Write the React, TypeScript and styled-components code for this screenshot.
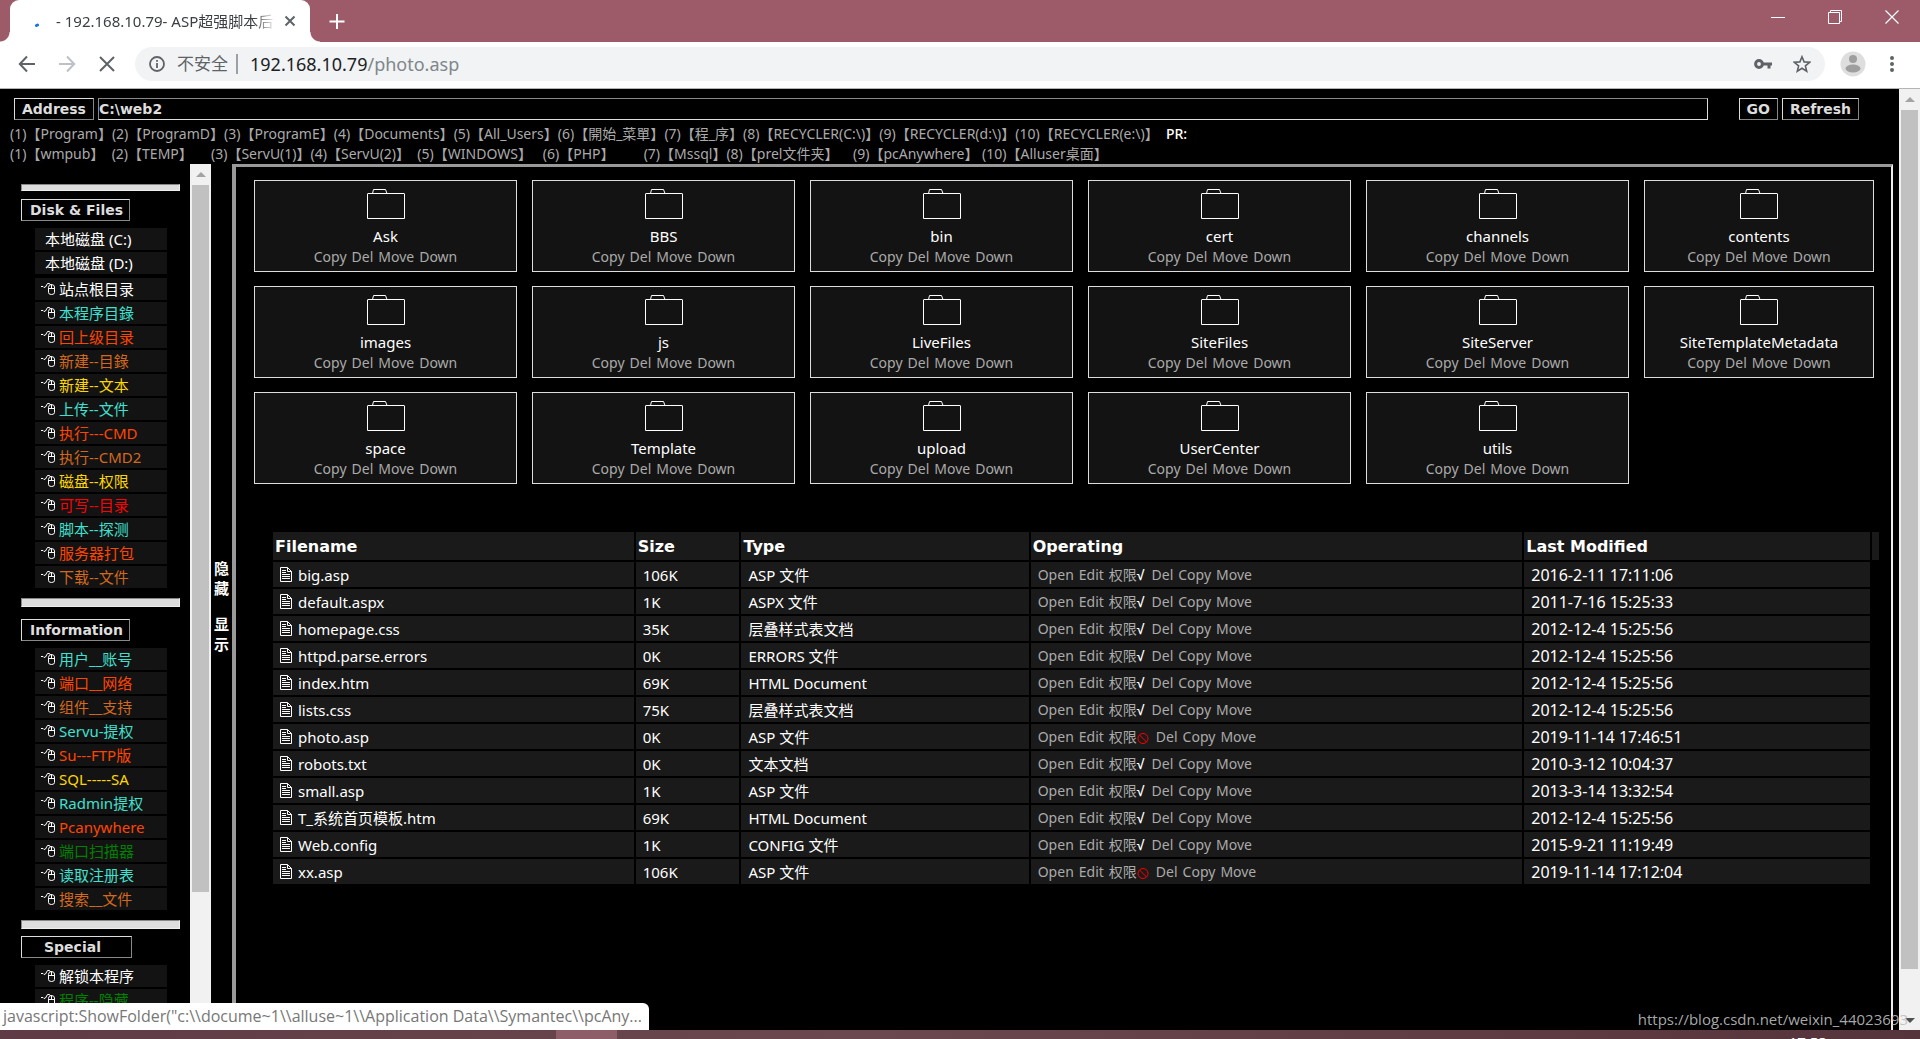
import React from "react";
import styled, { createGlobalStyle } from "styled-components";

const SANS = `"Noto Sans", "Noto Sans CJK SC", sans-serif`;
const BOLD = `"DejaVu Sans", "Noto Sans CJK SC", sans-serif`;

const GlobalStyle = createGlobalStyle`
  *, *::before, *::after { box-sizing: border-box; }
  body { margin: 0; background: #000; font-family: ${SANS}; font-size: 14px; color: #fff; }
  button, input { font: inherit; color: inherit; margin: 0; padding: 0; border: 0; background: none; }
  a { color: inherit; text-decoration: none; }
  ul { list-style: none; margin: 0; padding: 0; }
`;

/* ---------- browser window ---------- */

const Window = styled.div`
  display: flex;
  flex-direction: column;
  height: 100vh;
  overflow: hidden;
`;

const TabStrip = styled.header`
  display: flex;
  flex: none;
  height: 42px;
  padding-left: 10px;
  background: #9d5b69;
`;

const Tab = styled.div`
  position: relative;
  display: flex;
  align-items: center;
  width: 300px;
  padding: 0 12px 0 24px;
  background: #fff;
  border-radius: 9px 9px 0 0;

  &::before, &::after {
    content: "";
    position: absolute;
    bottom: 0;
    width: 10px;
    height: 10px;
  }
  &::before { right: 100%; background: radial-gradient(circle at 0 0, transparent 9px, #fff 10px); }
  &::after { left: 100%; background: radial-gradient(circle at 100% 0, transparent 9px, #fff 10px); }
`;

const TabTitle = styled.span`
  flex: 1;
  margin: 0 6px 0 14px;
  overflow: hidden;
  white-space: nowrap;
  font-size: 15px;
  line-height: 22px;
  color: #3c4043;
  mask-image: linear-gradient(90deg, #000 90%, transparent);
`;

const IconButton = styled.button<{ $w: number; $color?: string }>`
  display: flex;
  flex: none;
  align-items: center;
  justify-content: center;
  width: ${(p) => p.$w}px;
  height: 34px;
  color: ${(p) => p.$color || "#5f6368"};
`;

const WindowControls = styled.div`
  display: flex;
  margin-left: auto;
`;

const Toolbar = styled.div`
  display: flex;
  flex: none;
  align-items: center;
  height: 47px;
  padding: 0 8px 2px 7px;
  background: #fff;
  border-bottom: 1px solid #b4b4b4;
`;

const UrlBar = styled.div`
  display: flex;
  flex: 1;
  align-items: center;
  height: 34px;
  margin: 0 8px;
  padding: 0 4px 0 14px;
  border-radius: 17px;
  background: #f1f3f4;
  font-size: 17px;
  color: #5f6368;
`;

const Insecure = styled.span`
  margin-left: 12px;
  padding-right: 8px;
  border-right: 2px solid #9aa0a6;
  line-height: 20px;
`;

const Url = styled.span`
  flex: 1;
  margin-left: 12px;
  font-size: 18px;
  color: #80868b;
  b { font-weight: 400; color: #202124; }
`;

/* ---------- scroll bars ---------- */

const Track = styled.div`
  display: flex;
  flex: none;
  flex-direction: column;
  align-items: center;
  width: 21px;
  background: #f1f1f1;
`;

const Arrow = styled.span<{ $down?: boolean }>`
  flex: none;
  width: 0;
  height: 0;
  margin: ${(p) => (p.$down ? "auto 0 7px" : "8px 0 8px")};
  border: 5px solid transparent;
  border-width: ${(p) => (p.$down ? "5px 5px 0" : "0 5px 5px")};
  border-color: ${(p) => (p.$down ? "#505050 transparent" : "transparent transparent #a3a3a3")};
`;

const Thumb = styled.div<{ $share: number }>`
  flex: 0 0 ${(p) => p.$share}%;
  width: 17px;
  background: #c1c1c1;
`;

/* ---------- page ---------- */

const Viewport = styled.div`
  display: flex;
  flex: 1;
  min-height: 0;
`;

const Page = styled.div`
  display: flex;
  flex: 1;
  flex-direction: column;
  min-width: 0;
  padding-top: 9px;
  background: #000;
`;

const AddressForm = styled.form`
  display: flex;
  gap: 4px;
  padding: 0 40px 0 14px;
`;

const BevelButton = styled.button`
  display: block;
  height: 22px;
  padding: 0 7px;
  border: 1px solid;
  border-color: #ddd #888 #888 #ddd;
  font: bold 14px/20px ${BOLD};
  color: #ddd;
  text-align: left;
  white-space: nowrap;
`;

const PathInput = styled.input`
  flex: 1;
  min-width: 0;
  height: 22px;
  margin-right: 27px;
  border: 1px solid;
  border-color: #888 #ddd #ddd #888;
  font: bold 14px/20px ${BOLD};
  color: #ddd;
`;

const Shortcuts = styled.nav`
  padding: 4px 10px 0;
  color: #aaa;
`;

const ShortcutRow = styled.div`
  line-height: 20px;
  white-space: pre;
  b { font-weight: 500; color: #fff; }
`;

const Frames = styled.div`
  display: flex;
  flex: 1;
  min-height: 0;
  padding-right: 6px;
`;

const Sidebar = styled.aside`
  display: flex;
  flex: none;
  width: 211px;
`;

const SidebarBody = styled.div`
  flex: 1;
  overflow: hidden;
  padding: 20px 10px 0 21px;
`;

const Rule = styled.hr<{ $h: number }>`
  height: ${(p) => p.$h}px;
  margin: 0;
  background: #ddd;
  border: 1px solid;
  border-color: #888 #eee #eee #888;
`;

const Group = styled.section<{ $top: number }>`
  padding: ${(p) => p.$top}px 0 10px;
`;

const GroupButton = styled(BevelButton)<{ $indent?: boolean }>`
  padding: ${(p) => (p.$indent ? "0 30px 0 22px" : "0 6px 0 8px")};
  margin-bottom: 7px;
`;

const Menu = styled.ul`
  display: grid;
  gap: 2px;
  width: 132px;
  margin-left: 14px;
  & + & { margin-top: 4px; }
`;

const MenuLink = styled.a<{ $color: string; $plain?: boolean }>`
  display: flex;
  align-items: center;
  gap: 4px;
  height: 22px;
  padding-left: ${(p) => (p.$plain ? 10 : 6)}px;
  background: #131313;
  font-size: 15px;
  line-height: 22px;
  white-space: nowrap;
  color: ${(p) => p.$color};
`;

const Toggle = styled.div`
  display: flex;
  flex: none;
  flex-direction: column;
  justify-content: center;
  align-items: center;
  gap: 16px;
  width: 21px;
  padding-top: 18px;
`;

const ToggleButton = styled.button`
  width: 16px;
  font-size: 15px;
  font-weight: 700;
  line-height: 20px;
`;

const MainFrame = styled.main`
  flex: 1;
  min-width: 0;
  padding: 13px 17px 0 18px;
  border: 0 solid;
  border-width: 3px 2px 0 4px;
  border-color: #999 #eee #999 #999;
`;

const FolderGrid = styled.div`
  display: grid;
  grid-template-columns: repeat(5, 263fr) 230fr;
  gap: 14px 15px;
`;

const FolderCard = styled.article`
  display: flex;
  flex-direction: column;
  align-items: center;
  height: 92px;
  padding-top: 7px;
  border: 1px solid #ddd;
  background: #131313;
`;

const FolderName = styled.a`
  margin: 7px 0 1px;
  font-size: 15px;
  line-height: 20px;
`;

const Actions = styled.span`
  display: flex;
  align-items: center;
  gap: 5px;
  font-size: 14px;
  line-height: 20px;
  color: #aaa;
`;

const Permission = styled.span`
  display: flex;
  align-items: center;
  padding-right: 2px;
  b { color: #fff; font-family: "Liberation Sans", sans-serif; }
`;

const FileTable = styled.table`
  width: calc(100% - 10px);
  margin: 46px -7px 0 17px;
  border-collapse: separate;
  border-spacing: 2px;
  table-layout: fixed;
`;

const HeadCell = styled.th`
  height: 28px;
  padding: 2px 2px 0;
  background: #1a1a1a;
  font: bold 16px/24px ${BOLD};
  text-align: left;
`;

const Cell = styled.td<{ $size?: number }>`
  height: 25px;
  padding: 0 7px;
  background: #1a1a1a;
  font-size: ${(p) => p.$size || 15}px;
  line-height: 22px;
  white-space: nowrap;
`;

const FileLink = styled.a`
  display: flex;
  align-items: center;
  gap: 6px;
`;

/* ---------- overlays and task bar ---------- */

const StatusBubble = styled.div`
  position: absolute;
  left: 0;
  bottom: 9px;
  height: 27px;
  padding: 0 7px 0 3px;
  border-radius: 0 6px 0 0;
  background: #fff;
  font: 16px/26px "Open Sans", sans-serif;
  color: #777;
`;

const Watermark = styled.div`
  position: absolute;
  right: 12px;
  bottom: 9px;
  font: 15px/22px "Open Sans", sans-serif;
  color: rgba(190, 190, 190, 0.9);
`;

const TaskBar = styled.footer`
  display: flex;
  flex: none;
  justify-content: space-between;
  height: 9px;
  padding: 0 93px 0 556px;
  overflow: hidden;
  background: linear-gradient(90deg, #5f3b45, #6b474f 45%, #56343b);
  font-size: 15px;
  line-height: 24px;
`;

const ActiveApp = styled.span`
  width: 61px;
  background: #8d5d68;
`;

/* ---------- icons ---------- */

const Svg = ({ w, h, children }: { w: number; h: number; children: React.ReactNode }) => (
  <svg width={w} height={h} viewBox={`0 0 ${w} ${h}`} fill="none" stroke="currentColor" aria-hidden="true">
    {children}
  </svg>
);

const MouseIcon = () => (
  <svg width="14" height="14" viewBox="0 0 14 14" fill="none" stroke="#fff" aria-hidden="true">
    <path d="M0 4.5 H2 L3 5.5 L4.5 5 L6.5 1.5 H8.5 L9.5 3" />
    <path d="M7.5 5.5 Q7.5 3 10 2.5 Q13.5 2.5 13.5 5 V10.5 Q13.5 12.5 10.5 12.5 Q7.5 12.5 7.5 10.5 Z M7.5 6.5 H13.5 M10.5 2.5 V6.5" />
  </svg>
);

const FolderIcon = () => (
  <Svg w={38} h={31}>
    <path d="M0.5 30.5 V6 Q0.5 5.5 1 5.5 H37 Q37.5 5.5 37.5 6 V30.5 Z M5.5 5.5 L6.5 1.5 H18.5 L20 5.5" />
  </Svg>
);

const FileIcon = () => (
  <Svg w={12} h={15}>
    <path d="M0.5 0.5 H7.5 L11.5 4.5 V14.5 H0.5 Z M7.5 0.5 V4.5 H11.5" />
    <path d="M2 3.5 H6 M2 5.5 H6 M2 7.5 H10 M2 9.5 H10 M2 11.5 H10" />
  </Svg>
);

const BanIcon = () => (
  <svg width="12" height="14" viewBox="0 0 12 14" fill="none" stroke="#f00" aria-hidden="true">
    <circle cx="6" cy="8.5" r="5" />
    <path d="M2.5 5 L9.5 12" />
  </svg>
);

/* ---------- data ---------- */

const shortcutRows: string[][] = [
  ["(1)【Program】", "(2)【ProgramD】", "(3)【ProgramE】", "(4)【Documents】", "(5)【All_Users】", "(6)【開始_菜單】", "(7)【程_序】", "(8)【RECYCLER(C:\\)】", "(9)【RECYCLER(d:\\)】", "(10)【RECYCLER(e:\\)】  "],
  ["(1)【wmpub】  ", "(2)【TEMP】     ", "(3)【ServU(1)】", "(4)【ServU(2)】  ", "(5)【WINDOWS】   ", "(6)【PHP】        ", "(7)【Mssql】", "(8)【prel文件夹】    ", "(9)【pcAnywhere】 ", "(10)【Alluser桌面】"],
];

const C = { w: "#fff", t: "#40e0d0", o: "#ff4500", c: "#d2691e", y: "#ffd700", r: "#ff0000", g: "#008000" };

type Item = [string, string];

const diskItems: Item[] = [
  ["站点根目录", C.w], ["本程序目錄", C.t], ["回上级目录", C.o], ["新建--目錄", C.c], ["新建--文本", C.y],
  ["上传--文件", C.t], ["执行---CMD", C.o], ["执行--CMD2", C.c], ["磁盘--权限", C.y], ["可写--目录", C.r],
  ["脚本--探测", C.t], ["服务器打包", C.o], ["下载--文件", C.c],
];

const infoItems: Item[] = [
  ["用户__账号", C.t], ["端口__网络", C.o], ["组件__支持", C.c], ["Servu-提权", C.t], ["Su---FTP版", C.o],
  ["SQL-----SA", C.y], ["Radmin提权", C.t], ["Pcanywhere", C.o], ["端口扫描器", C.g], ["读取注册表", C.t],
  ["搜索__文件", C.c],
];

const specialItems: Item[] = [["解锁本程序", C.w], ["程序--隐藏", C.g]];

const folders = [
  "Ask", "BBS", "bin", "cert", "channels", "contents",
  "images", "js", "LiveFiles", "SiteFiles", "SiteServer", "SiteTemplateMetadata",
  "space", "Template", "upload", "UserCenter", "utils",
];

const files: [string, string, string, boolean, string][] = [
  ["big.asp", "106K", "ASP 文件", true, "2016-2-11 17:11:06"],
  ["default.aspx", "1K", "ASPX 文件", true, "2011-7-16 15:25:33"],
  ["homepage.css", "35K", "层叠样式表文档", true, "2012-12-4 15:25:56"],
  ["httpd.parse.errors", "0K", "ERRORS 文件", true, "2012-12-4 15:25:56"],
  ["index.htm", "69K", "HTML Document", true, "2012-12-4 15:25:56"],
  ["lists.css", "75K", "层叠样式表文档", true, "2012-12-4 15:25:56"],
  ["photo.asp", "0K", "ASP 文件", false, "2019-11-14 17:46:51"],
  ["robots.txt", "0K", "文本文档", true, "2010-3-12 10:04:37"],
  ["small.asp", "1K", "ASP 文件", true, "2013-3-14 13:32:54"],
  ["T_系统首页模板.htm", "69K", "HTML Document", true, "2012-12-4 15:25:56"],
  ["Web.config", "1K", "CONFIG 文件", true, "2015-9-21 11:19:49"],
  ["xx.asp", "106K", "ASP 文件", false, "2019-11-14 17:12:04"],
];

const MenuList = ({ items }: { items: Item[] }) => (
  <Menu>
    {items.map(([label, color]) => (
      <li key={label}>
        <MenuLink href="#" $color={color}>
          <MouseIcon />
          {label}
        </MenuLink>
      </li>
    ))}
  </Menu>
);

export default function App() {
  return (
    <Window>
      <GlobalStyle />
      <TabStrip>
        <Tab>
          <Svg w={8} h={12}>
            <path d="M2.5 10.5 L3.5 10" stroke="#1a73e8" strokeWidth="3" strokeLinecap="round" />
          </Svg>
          <TabTitle>- 192.168.10.79- ASP超强脚本后</TabTitle>
          <IconButton $w={16} aria-label="Close tab">
            <Svg w={12} h={12}><path d="M1.5 1.5 L10.5 10.5 M10.5 1.5 L1.5 10.5" strokeWidth="2" /></Svg>
          </IconButton>
        </Tab>
        <IconButton $w={54} $color="#fff" aria-label="New tab">
          <Svg w={16} h={26}><path d="M8 10 V25 M0.5 17.5 H15.5" strokeWidth="2" /></Svg>
        </IconButton>
        <WindowControls>
          <IconButton $w={57} $color="#fff" aria-label="Minimize">
            <Svg w={14} h={14}><path d="M0 7.5 H14" /></Svg>
          </IconButton>
          <IconButton $w={57} $color="#fff" aria-label="Restore">
            <Svg w={14} h={14}><path d="M0.5 2.5 H11.5 V13.5 H0.5 Z M2.5 2.5 V0.5 H13.5 V11.5 H11.5" /></Svg>
          </IconButton>
          <IconButton $w={57} $color="#fff" aria-label="Close">
            <Svg w={14} h={14}><path d="M0.5 0.5 L13.5 13.5 M13.5 0.5 L0.5 13.5" strokeWidth="1.2" /></Svg>
          </IconButton>
        </WindowControls>
      </TabStrip>

      <Toolbar>
        <IconButton $w={40} aria-label="Back">
          <Svg w={18} h={18}><path d="M17 9 H2 M9 1.5 L1.8 9 L9 16.5" strokeWidth="2" /></Svg>
        </IconButton>
        <IconButton $w={40} $color="#bdc1c6" aria-label="Forward">
          <Svg w={18} h={18}><path d="M1 9 H16 M9 1.5 L16.2 9 L9 16.5" strokeWidth="2" /></Svg>
        </IconButton>
        <IconButton $w={40} aria-label="Stop">
          <Svg w={16} h={16}><path d="M1 1 L15 15 M15 1 L1 15" strokeWidth="2" /></Svg>
        </IconButton>
        <UrlBar>
          <Svg w={16} h={16}>
            <circle cx="8" cy="8" r="7" strokeWidth="1.8" />
            <path d="M8 7 V12 M8 4 V5.8" strokeWidth="1.8" />
          </Svg>
          <Insecure>不安全</Insecure>
          <Url><b>192.168.10.79</b>/photo.asp</Url>
          <IconButton $w={40} aria-label="Saved passwords">
            <Svg w={18} h={12}>
              <circle cx="5" cy="6" r="3.4" strokeWidth="3" />
              <path d="M9 6 H18 M15 6 V10.5" strokeWidth="3" />
            </Svg>
          </IconButton>
          <IconButton $w={38} aria-label="Bookmark this page">
            <Svg w={18} h={18}>
              <path d="M9 1.8 L11.1 6.9 L16.6 7.3 L12.4 10.9 L13.7 16.2 L9 13.3 L4.3 16.2 L5.6 10.9 L1.4 7.3 L6.9 6.9 Z" strokeWidth="1.6" />
            </Svg>
          </IconButton>
        </UrlBar>
        <IconButton $w={39} aria-label="Profile">
          <svg width="26" height="26" viewBox="0 0 26 26" aria-hidden="true">
            <circle cx="13" cy="13" r="12.5" fill="#dedede" />
            <circle cx="13" cy="8" r="4" fill="#9e9e9e" />
            <ellipse cx="13" cy="17.5" rx="7.5" ry="4" fill="#9e9e9e" />
          </svg>
        </IconButton>
        <IconButton $w={40} aria-label="Menu">
          <svg width="4" height="18" viewBox="0 0 4 18" fill="#5f6368" aria-hidden="true">
            <circle cx="2" cy="3" r="2" /><circle cx="2" cy="9" r="2" /><circle cx="2" cy="15" r="2" />
          </svg>
        </IconButton>
      </Toolbar>

      <Viewport>
        <Page>
          <AddressForm onSubmit={(e) => e.preventDefault()}>
            <BevelButton type="button">Address</BevelButton>
            <PathInput aria-label="Address" defaultValue="C:\web2" />
            <BevelButton type="submit">GO</BevelButton>
            <BevelButton type="button">Refresh</BevelButton>
          </AddressForm>
          <Shortcuts>
            {shortcutRows.map((row, i) => (
              <ShortcutRow key={i}>
                {row.map((label) => <a key={label} href="#">{label}</a>)}
                {i === 0 && <b>PR:</b>}
              </ShortcutRow>
            ))}
          </Shortcuts>

          <Frames>
            <Sidebar>
              <SidebarBody>
                <Rule $h={7} />
                <Group $top={8}>
                  <GroupButton>Disk &amp; Files</GroupButton>
                  <Menu>
                    {["本地磁盘 (C:)", "本地磁盘 (D:)"].map((d) => (
                      <li key={d}><MenuLink href="#" $color="#fff" $plain>{d}</MenuLink></li>
                    ))}
                  </Menu>
                  <MenuList items={diskItems} />
                </Group>
                <Rule $h={9} />
                <Group $top={12}>
                  <GroupButton>Information</GroupButton>
                  <MenuList items={infoItems} />
                </Group>
                <Rule $h={9} />
                <Group $top={7}>
                  <GroupButton $indent>Special</GroupButton>
                  <MenuList items={specialItems} />
                </Group>
              </SidebarBody>
              <Track>
                <Arrow />
                <Thumb $share={81.6} />
              </Track>
            </Sidebar>
            <Toggle>
              <ToggleButton>隐藏</ToggleButton>
              <ToggleButton>显示</ToggleButton>
            </Toggle>
            <MainFrame>
              <FolderGrid>
                {folders.map((name) => (
                  <FolderCard key={name}>
                    <FolderIcon />
                    <FolderName href="#">{name}</FolderName>
                    <Actions>
                      <a href="#">Copy</a><a href="#">Del</a><a href="#">Move</a><a href="#">Down</a>
                    </Actions>
                  </FolderCard>
                ))}
              </FolderGrid>
              <FileTable>
                <colgroup>
                  <col style={{ width: "22.6%" }} />
                  <col style={{ width: "6.5%" }} />
                  <col style={{ width: "18%" }} />
                  <col style={{ width: "30.8%" }} />
                  <col />
                  <col style={{ width: 7 }} />
                </colgroup>
                <thead>
                  <tr>
                    {["Filename", "Size", "Type", "Operating", "Last Modified", ""].map((h) => (
                      <HeadCell key={h} scope="col">{h}</HeadCell>
                    ))}
                  </tr>
                </thead>
                <tbody>
                  {files.map(([name, size, type, ok, date]) => (
                    <tr key={name}>
                      <Cell><FileLink href="#"><FileIcon />{name}</FileLink></Cell>
                      <Cell>{size}</Cell>
                      <Cell>{type}</Cell>
                      <Cell>
                        <Actions>
                          <a href="#">Open</a>
                          <a href="#">Edit</a>
                          <Permission><a href="#">权限</a>{ok ? <b>√</b> : <BanIcon />}</Permission>
                          <a href="#">Del</a>
                          <a href="#">Copy</a>
                          <a href="#">Move</a>
                        </Actions>
                      </Cell>
                      <Cell $size={16}>{date}</Cell>
                    </tr>
                  ))}
                </tbody>
              </FileTable>
            </MainFrame>
          </Frames>
        </Page>
        <Track>
          <Arrow />
          <Thumb $share={91.3} />
          <Arrow $down />
        </Track>
      </Viewport>

      <TaskBar>
        <ActiveApp />
        <span>17:53</span>
      </TaskBar>

      <StatusBubble>{'javascript:ShowFolder("c:\\\\docume~1\\\\alluse~1\\\\Application Data\\\\Symantec\\\\pcAny...'}</StatusBubble>
      <Watermark>https://blog.csdn.net/weixin_44023693</Watermark>
    </Window>
  );
}
